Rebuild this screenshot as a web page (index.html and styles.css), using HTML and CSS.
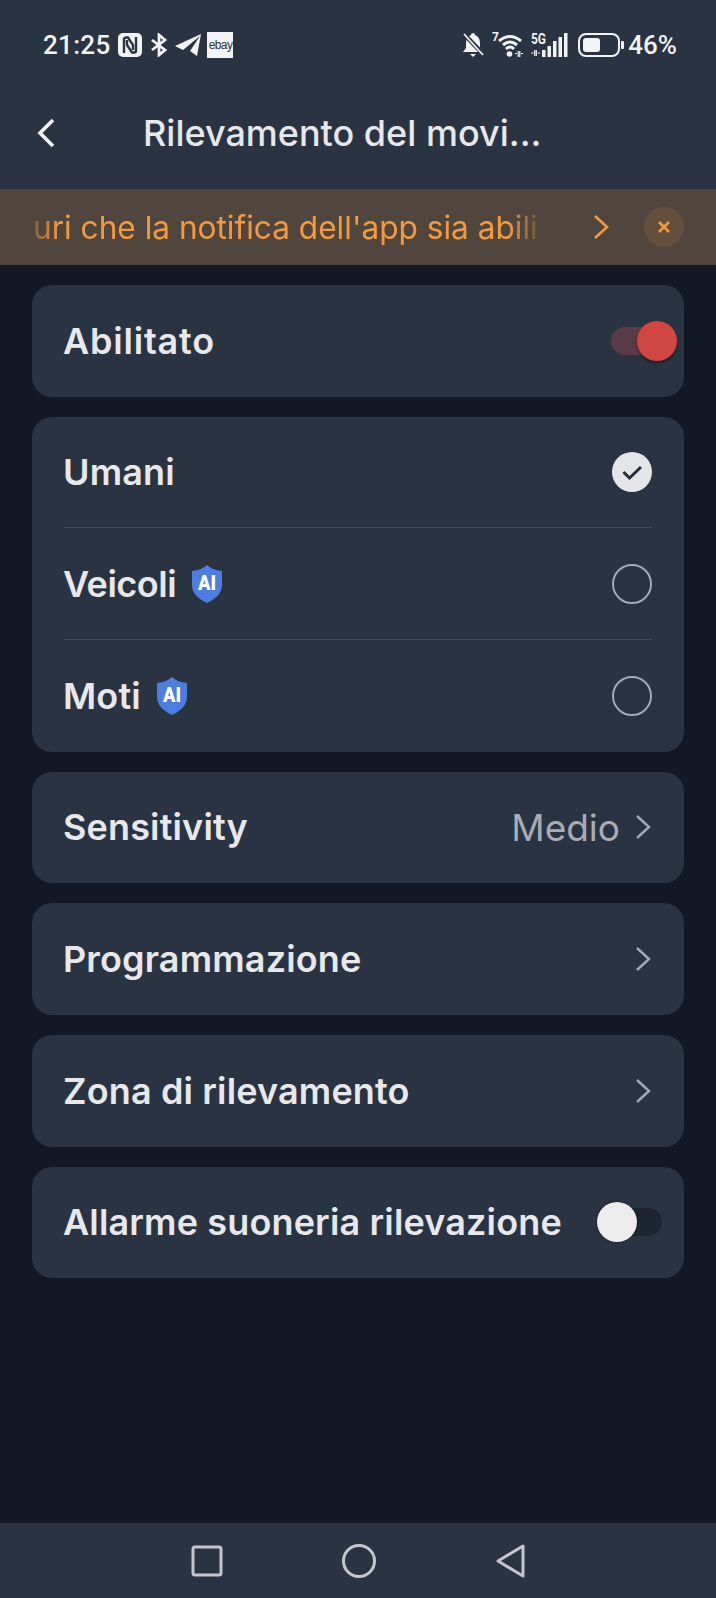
FILE: index.html
```html
<!DOCTYPE html>
<html>
<head>
  <meta charset="utf-8">
  <title>Rilevamento del movimento</title>
  <link rel="stylesheet" href="styles.css">
</head>
<body>
  <div class="top">
    <div class="status">
      <div class="st-left">
        <span class="time">21:25</span>
        <svg class="ic-nfc" width="24" height="24" viewBox="0 0 24 24"><rect x="0" y="0" width="24" height="24" rx="5" fill="#f2f3f4"/><path d="M6 20V6.5Q6 4.500 8 4.500H10L15 12V17" fill="none" stroke="#2a3342" stroke-width="2.400"/><path d="M18 4V17.500Q18 19.500 16 19.500H14L9 12V7" fill="none" stroke="#2a3342" stroke-width="2.400"/></svg>
        <svg class="ic-bt" width="18" height="24" viewBox="0 0 18 24"><path d="M2 7L15 17L9 22V2L15 7L2 17" fill="none" stroke="#f2f3f4" stroke-width="2.800"/></svg>
        <svg class="ic-tg" width="26" height="24" viewBox="0 0 26 24"><path d="M0 13L26 1L22 23L15 18L25 3L8 17Z" fill="#f2f3f4"/></svg>
        <span class="ebay">ebay</span>
      </div>
      <div class="st-right">
        <svg width="24" height="26" viewBox="0 0 24 26"><path d="M12 1Q14 1 14 3Q19 5 19 11V16L22 20H2L5 16V11Q5 5 10 3Q10 1 12 1Z" fill="#f2f3f4"/><path d="M9 22H15L12 25Z" fill="#f2f3f4"/><path d="M2 1L23 23" stroke="#2a3342" stroke-width="4.500"/><path d="M3 2L22 23" stroke="#f2f3f4" stroke-width="1.800"/></svg>
        <svg class="ic-wifi" width="32" height="32" viewBox="0 -3 32 32"><text x="0" y="9" class="tiny">7</text><path d="M7 9Q18 0 29 9M11 13Q18 7 25 13M14 17Q18 13 22 17" fill="none" stroke="#f2f3f4" stroke-width="3"/><circle cx="17.500" cy="22" r="2.800" fill="#f2f3f4"/><path d="M23 21.500H25M29 21.500H31M26.200 19V25M27.800 19V25" stroke="#f2f3f4" stroke-width="1.200"/></svg>
        <svg class="ic-signal" width="38" height="32" viewBox="0 -3 38 32"><text x="0" y="12" class="tiny tiny-5g" textLength="15" lengthAdjust="spacingAndGlyphs">5G</text><path d="M0 21H2.500M6.500 21H9M3.700 18V24M5.300 18V24" stroke="#f2f3f4" stroke-width="1.200"/><rect x="11" y="18" width="3.500" height="7" fill="#f2f3f4"/><rect x="16.500" y="14" width="3.500" height="11" fill="#f2f3f4"/><rect x="22" y="9" width="3.500" height="16" fill="#f2f3f4"/><rect x="27.500" y="5" width="3.500" height="20" fill="#f2f3f4"/><rect x="33" y="1" width="3.500" height="24" fill="#f2f3f4"/></svg>
        <div class="batt"><div class="batt-fill"></div></div>
        <span class="pct">46%</span>
      </div>
    </div>
    <div class="nav-bar">
      <svg class="back" width="20" height="30" viewBox="0 0 20 30"><path d="M17 2L4 15L17 28" fill="none" stroke="#f1f2f4" stroke-width="3.600"/></svg>
      <h1>Rilevamento del movi...</h1>
    </div>
  </div>

  <div class="notice">
    <div class="notice-text"><span>uri che la notifica dell'app sia abili</span></div>
    <svg class="notice-arrow" width="16" height="26" viewBox="0 0 16 26"><path d="M2 2L14 13L2 24" fill="none" stroke="#f39a3f" stroke-width="2.600"/></svg>
    <div class="notice-close">
      <svg width="14" height="14" viewBox="0 0 14 14"><path d="M2 2L12 12M12 2L2 12" stroke="#f39a3f" stroke-width="2.600"/></svg>
    </div>
  </div>

  <div class="list">
    <div class="card">
      <div class="row">
        <span class="label wide">Abilitato</span>
        <div class="toggle on"><div class="thumb"></div></div>
      </div>
    </div>

    <div class="card">
      <div class="row line">
        <span class="label">Umani</span>
        <svg width="40" height="40" viewBox="0 0 40 40"><circle cx="20" cy="20" r="20" fill="#e4e5e7"/><path d="M11.500 20L17.500 26L29 15" fill="none" stroke="#252c39" stroke-width="3"/></svg>
      </div>
      <div class="row line">
        <div class="label-wrap">
          <span class="label tight">Veicoli</span>
          <svg class="shield" width="32" height="38" viewBox="0 0 32 38"><path d="M16 0Q21 5 31 6V20Q31 31 16 38Q1 31 1 20V6Q11 5 16 0Z" fill="#4e7de0"/><text x="16" y="25" class="ai" textLength="18" lengthAdjust="spacingAndGlyphs">AI</text></svg>
        </div>
        <div class="radio"></div>
      </div>
      <div class="row">
        <div class="label-wrap">
          <span class="label">Moti</span>
          <svg class="shield" width="32" height="38" viewBox="0 0 32 38"><path d="M16 0Q21 5 31 6V20Q31 31 16 38Q1 31 1 20V6Q11 5 16 0Z" fill="#4e7de0"/><text x="16" y="25" class="ai" textLength="18" lengthAdjust="spacingAndGlyphs">AI</text></svg>
        </div>
        <div class="radio"></div>
      </div>
    </div>

    <div class="card">
      <div class="row">
        <span class="label">Sensitivity</span>
        <div class="value-wrap">
          <span class="value">Medio</span>
          <svg class="chev" width="16" height="26" viewBox="0 0 16 26"><path d="M2 2L14 13L2 24" fill="none" stroke="#a3a9b3" stroke-width="2.400"/></svg>
        </div>
      </div>
    </div>

    <div class="card">
      <div class="row">
        <span class="label">Programmazione</span>
        <svg class="chev" width="16" height="26" viewBox="0 0 16 26"><path d="M2 2L14 13L2 24" fill="none" stroke="#a3a9b3" stroke-width="2.400"/></svg>
      </div>
    </div>

    <div class="card">
      <div class="row">
        <span class="label">Zona di rilevamento</span>
        <svg class="chev" width="16" height="26" viewBox="0 0 16 26"><path d="M2 2L14 13L2 24" fill="none" stroke="#a3a9b3" stroke-width="2.400"/></svg>
      </div>
    </div>

    <div class="card">
      <div class="row">
        <span class="label">Allarme suoneria rilevazione</span>
        <div class="toggle off"><div class="thumb"></div></div>
      </div>
    </div>
  </div>

  <div class="softkeys">
    <svg width="32" height="32" viewBox="0 0 32 32"><rect x="2" y="2" width="28" height="28" rx="2" fill="none" stroke="#c3c6cc" stroke-width="3"/></svg>
    <svg width="34" height="34" viewBox="0 0 34 34"><circle cx="17" cy="17" r="15.500" fill="none" stroke="#c3c6cc" stroke-width="3"/></svg>
    <svg width="30" height="34" viewBox="0 0 30 34"><path d="M2 17L27 2V32Z" fill="none" stroke="#c3c6cc" stroke-width="3" stroke-linejoin="round"/></svg>
  </div>
</body>
</html>
```

FILE: styles.css
```css
html, body {
  margin: 0;
  padding: 0;
}
body {
  width: 716px;
  height: 1598px;
  background: #121824;
  font-family: "Inter", "Liberation Sans", sans-serif;
  color: #e6e8eb;
  display: flex;
  flex-direction: column;
  overflow: hidden;
}

.top {
  height: 189px;
  background: #2a3342;
  display: flex;
  flex-direction: column;
}
.status {
  height: 90px;
  padding: 32px 39px 0 43px;
  box-sizing: border-box;
  display: flex;
  justify-content: space-between;
  align-items: flex-start;
}
.st-left, .st-right {
  display: flex;
  align-items: center;
  height: 26px;
}
.time {
  font-family: "Roboto", sans-serif;
  font-size: 26px;
  font-weight: 500;
  color: #f2f3f4;
  letter-spacing: 0.3px;
  margin-right: 8px;
}
.ic-nfc { margin-right: 8px; }
.ic-bt { margin-right: 7px; }
.ic-tg { margin-right: 6px; }
.ebay {
  width: 26px;
  height: 26px;
  background: #f2f3f4;
  color: #333;
  font: 12px/26px "Liberation Sans", sans-serif;
  text-align: center;
  letter-spacing: -0.6px;
}
.ic-wifi { margin-left: 7px; }
.ic-signal { margin-left: 7px; }
.tiny {
  font: 700 12px "Roboto", sans-serif;
  fill: #f2f3f4;
}
.tiny-5g { font-size: 15px; }
.batt {
  width: 42px;
  height: 24px;
  margin-left: 9px;
  border: 2px solid #f2f3f4;
  border-radius: 8px;
  box-sizing: border-box;
  padding: 3px;
  position: relative;
}
.batt:after {
  content: "";
  position: absolute;
  right: -6px;
  top: 6px;
  width: 3px;
  height: 8px;
  background: #f2f3f4;
  border-radius: 1px;
}
.batt-fill {
  width: 17px;
  height: 100%;
  background: #f2f3f4;
  border-radius: 3px;
}
.pct {
  font-family: "Roboto", sans-serif;
  font-size: 26px;
  font-weight: 500;
  color: #f2f3f4;
  margin-left: 8px;
}

.nav-bar {
  display: flex;
  align-items: center;
  height: 86px;
  padding-left: 36px;
}
.back { margin-right: 87px; }
h1 {
  margin: 0;
  font-size: 36px;
  font-weight: 500;
  color: #e6e8eb;
}

.notice {
  height: 76px;
  background: #51463d;
  display: flex;
  align-items: center;
  padding: 0 32px 0 33px;
  color: #f39a3f;
}
.notice-text {
  width: 505px;
  overflow: hidden;
  white-space: nowrap;
  font-size: 31.600px;
  -webkit-mask-image: linear-gradient(to right, rgba(0,0,0,.3), #000 5%, #000 94%, rgba(0,0,0,.2));
  mask-image: linear-gradient(to right, rgba(0,0,0,.3), #000 5%, #000 94%, rgba(0,0,0,.2));
}
.notice-arrow { margin-left: 55px; }
.notice-close {
  width: 40px;
  height: 40px;
  border-radius: 50%;
  background: #634f3b;
  margin-left: auto;
  display: flex;
  align-items: center;
  justify-content: center;
}

.list {
  flex: 1;
  padding: 20px 32px 0;
  display: flex;
  flex-direction: column;
  gap: 20px;
}
.card {
  background: #2a3342;
  border-radius: 20px;
}
.row {
  height: 111.670px;
  margin: 0 32px;
  box-sizing: border-box;
  display: flex;
  align-items: center;
  justify-content: space-between;
}
.row.line {
  border-bottom: 1px solid #444c5a;
}
.label {
  font-size: 36px;
  font-weight: 600;
  letter-spacing: 0.15px;
  margin-left: -1px;
  color: #e6e8eb;
}
.label.wide { letter-spacing: 0.8px; }
.label.tight { letter-spacing: -0.5px; }
.label-wrap {
  display: flex;
  align-items: center;
  gap: 15px;
}
.ai {
  font: 900 21px "Roboto", sans-serif;
  fill: #fff;
  text-anchor: middle;
}
.radio {
  width: 40px;
  height: 40px;
  box-sizing: border-box;
  border: 2px solid #a4a9b2;
  border-radius: 50%;
}
.value-wrap {
  display: flex;
  align-items: center;
  gap: 15px;
}
.value {
  font-size: 37px;
  color: #a8acb4;
}
.chev { margin-right: 1px; }

.toggle {
  position: relative;
  height: 28px;
  border-radius: 14px;
}
.thumb {
  position: absolute;
  top: -6px;
  width: 40px;
  height: 40px;
  border-radius: 50%;
}
.toggle.on {
  background: #5b3a47;
  width: 49px;
  margin-right: -8px;
}
.toggle.on .thumb {
  right: -17px;
  background: #cf4643;
  box-shadow: 0 2px 3px rgba(0,0,0,.4);
}
.toggle.off {
  background: #1d2531;
  width: 65px;
  margin-right: -10px;
}
.toggle.off .thumb {
  left: 0;
  background: #ececec;
  box-shadow: 0 0 2px rgba(0,0,0,.7);
}

.softkeys {
  height: 75px;
  background: #2a3342;
  display: flex;
  align-items: center;
  justify-content: center;
  gap: 119.500px;
}
```
